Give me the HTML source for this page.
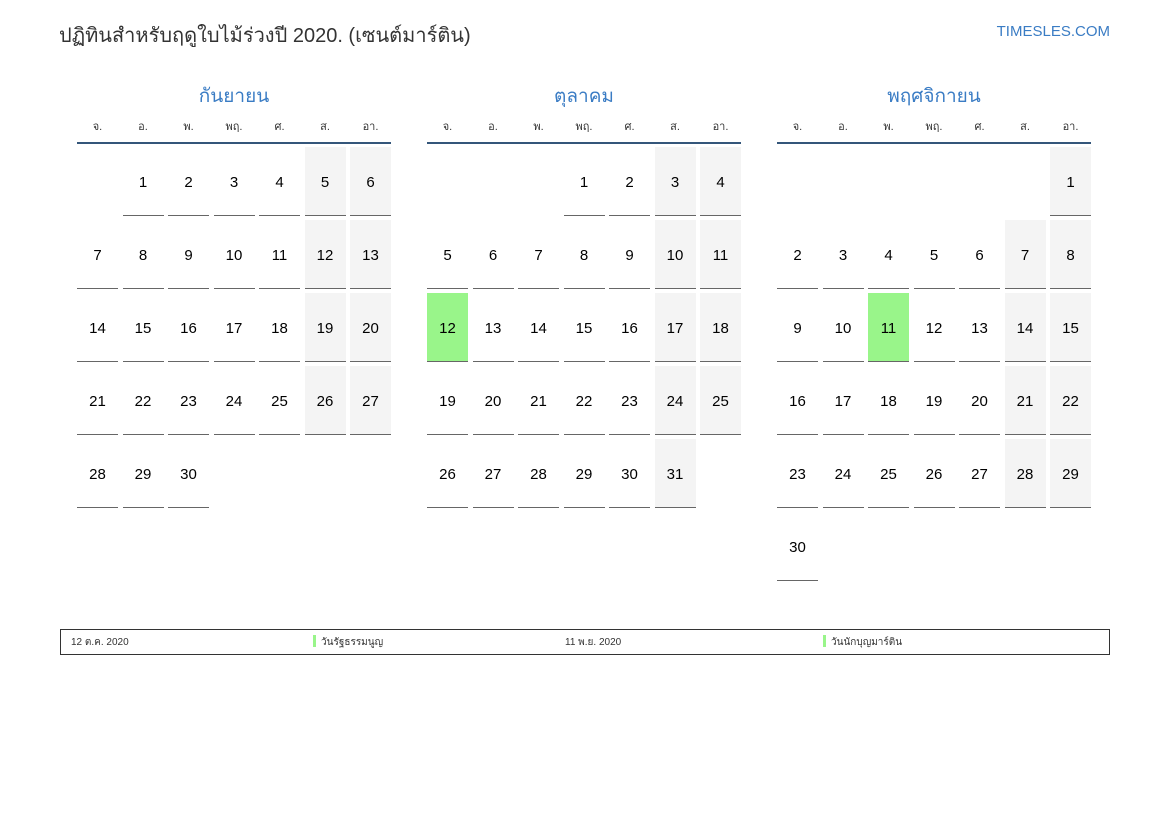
<!DOCTYPE html>
<html><head><meta charset="utf-8"><style>
*{margin:0;padding:0;box-sizing:border-box}
body{width:1169px;height:827px;background:#fff;font-family:"Liberation Sans","Noto Sans CJK SC",sans-serif;position:relative;overflow:hidden;color:#000}
.title{position:absolute;left:59px;top:19px;font-size:20px;color:#333}
.site{position:absolute;right:59px;top:23px;font-size:15px;color:#3a7cc4}
.m{position:absolute;top:81px;width:314px}
.mt{text-align:center;font-size:19px;color:#3a7cc4;height:28px}
.dn{display:grid;grid-template-columns:repeat(7,41px);column-gap:4.5px;font-size:11px;color:#333;text-align:center;margin-top:8px;height:25px;line-height:20px}
.hr{height:2px;background:#34567a;width:314px}
.g{display:grid;grid-template-columns:repeat(7,41px);column-gap:4.5px;row-gap:4px;grid-auto-rows:69px;margin-top:3px}
.g div{border-bottom:1px solid #666;font-size:15px;display:flex;align-items:center;justify-content:center;padding-top:3px}
.g div.e{border:none}
.g div.w{background:#f4f4f4}
.g div.h{background:#99f58a}
.leg{position:absolute;left:60px;top:629px;width:1050px;height:26px;border:1px solid #333;font-size:10px;color:#333}
.leg span{position:absolute;top:5px}
.bar{position:absolute;top:5px;width:3px;height:12px;background:#99f58a}
</style></head><body>
<div class="title">ปฏิทินสำหรับฤดูใบไม้ร่วงปี 2020. (เซนต์มาร์ติน)</div>
<div class="site">TIMESLES.COM</div>

<div class="m" style="left:77px">
<div class="mt">กันยายน</div>
<div class="dn"><span>จ.</span><span>อ.</span><span>พ.</span><span>พฤ.</span><span>ศ.</span><span>ส.</span><span>อา.</span></div>
<div class="hr"></div>
<div class="g">
<div class="e"></div><div>1</div><div>2</div><div>3</div><div>4</div><div class="w">5</div><div class="w">6</div>
<div>7</div><div>8</div><div>9</div><div>10</div><div>11</div><div class="w">12</div><div class="w">13</div>
<div>14</div><div>15</div><div>16</div><div>17</div><div>18</div><div class="w">19</div><div class="w">20</div>
<div>21</div><div>22</div><div>23</div><div>24</div><div>25</div><div class="w">26</div><div class="w">27</div>
<div>28</div><div>29</div><div>30</div>
</div></div>

<div class="m" style="left:427px">
<div class="mt">ตุลาคม</div>
<div class="dn"><span>จ.</span><span>อ.</span><span>พ.</span><span>พฤ.</span><span>ศ.</span><span>ส.</span><span>อา.</span></div>
<div class="hr"></div>
<div class="g">
<div class="e"></div><div class="e"></div><div class="e"></div><div>1</div><div>2</div><div class="w">3</div><div class="w">4</div>
<div>5</div><div>6</div><div>7</div><div>8</div><div>9</div><div class="w">10</div><div class="w">11</div>
<div class="h">12</div><div>13</div><div>14</div><div>15</div><div>16</div><div class="w">17</div><div class="w">18</div>
<div>19</div><div>20</div><div>21</div><div>22</div><div>23</div><div class="w">24</div><div class="w">25</div>
<div>26</div><div>27</div><div>28</div><div>29</div><div>30</div><div class="w">31</div>
</div></div>

<div class="m" style="left:777px">
<div class="mt">พฤศจิกายน</div>
<div class="dn"><span>จ.</span><span>อ.</span><span>พ.</span><span>พฤ.</span><span>ศ.</span><span>ส.</span><span>อา.</span></div>
<div class="hr"></div>
<div class="g">
<div class="e"></div><div class="e"></div><div class="e"></div><div class="e"></div><div class="e"></div><div class="e"></div><div class="w">1</div>
<div>2</div><div>3</div><div>4</div><div>5</div><div>6</div><div class="w">7</div><div class="w">8</div>
<div>9</div><div>10</div><div class="h">11</div><div>12</div><div>13</div><div class="w">14</div><div class="w">15</div>
<div>16</div><div>17</div><div>18</div><div>19</div><div>20</div><div class="w">21</div><div class="w">22</div>
<div>23</div><div>24</div><div>25</div><div>26</div><div>27</div><div class="w">28</div><div class="w">29</div>
<div>30</div>
</div></div>

<div class="leg">
<span style="left:10px">12 ต.ค. 2020</span>
<div class="bar" style="left:252px"></div><span style="left:260px">วันรัฐธรรมนูญ</span>
<span style="left:504px">11 พ.ย. 2020</span>
<div class="bar" style="left:762px"></div><span style="left:770px">วันนักบุญมาร์ติน</span>
</div>
</body></html>
